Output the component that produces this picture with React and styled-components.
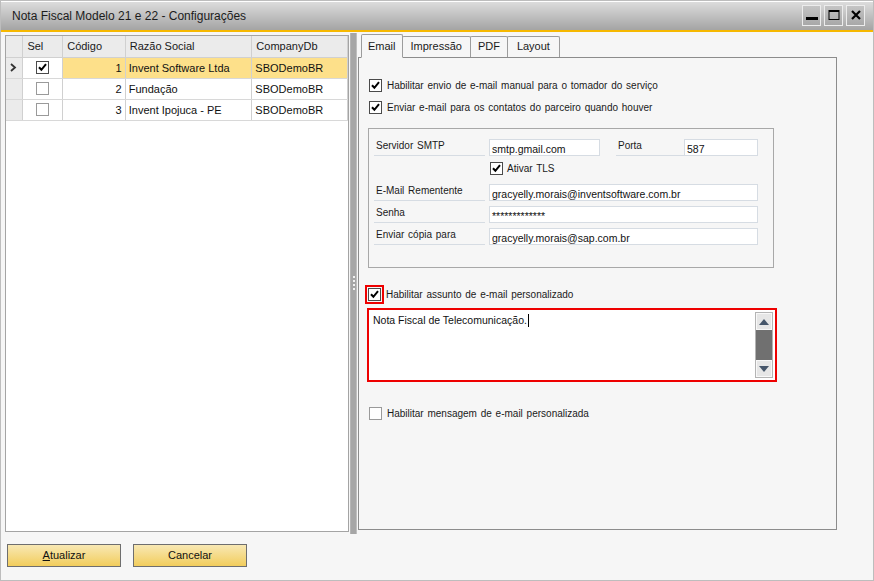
import React from 'react';
import styled, { createGlobalStyle } from 'styled-components';

const GlobalStyle = createGlobalStyle`
    html, body {
        margin: 0;
        padding: 0;
        background: #f6f6f6;
    }
    * {
        box-sizing: border-box;
    }
`

const Window = styled.div`
    background-color: #f6f6f6;
    border: 1px solid #bdbdbd;
    display: flex;
    flex-direction: column;
    font-family: "Liberation Sans", Arial, sans-serif;
    height: 581px;
    width: 874px;
`

const TitleBar = styled.div`
    align-items: center;
    background: linear-gradient(#dcdcdc, #a4a4a4);
    border-bottom: 2px solid #f6b800;
    border-top: 1px solid #ffffff;
    display: flex;
    height: 31px;
    padding: 0 8px 0 11px;
`

const Title = styled.div`
    color: #1c1c1c;
    flex: 1;
    font-size: 12px;
`

const WinButtons = styled.div`
    display: flex;
    gap: 3px;
    margin-top: -2px;
`

const WinButton = styled.div`
    align-items: center;
    background: linear-gradient(#c4c4c4, #a8a8a8);
    border: 1px solid #ececec;
    display: flex;
    height: 21px;
    justify-content: center;
    width: 19px;
`

const Main = styled.div`
    display: flex;
    height: 502px;
    padding-left: 4px;
`

const LeftPane = styled.div`
    padding-top: 3px;
    width: 344px;
`

const GridBox = styled.div`
    background: #ffffff;
    border: 1px solid #a4a4a4;
    height: 497px;
`

const Table = styled.table`
    border-collapse: collapse;
    font-size: 11px;
    table-layout: fixed;
`

const HeadCell = styled.th`
    background: #ebebeb;
    border-bottom: 1px solid #d0d0d0;
    border-right: 1px solid #d0d0d0;
    color: #1a1a1a;
    font-weight: normal;
    height: 21px;
    padding: 0 0 0 4px;
    text-align: left;
    width: ${p => p.w}px;
`

const RowHead = styled.td`
    background: #ebebeb;
    border-bottom: 1px solid #d8d8d8;
    border-right: 1px solid #d0d0d0;
    height: 21px;
    padding: 0 0 0 4px;
`

const Cell = styled.td`
    background: ${p => (p.sel ? '#fde08a' : '#ffffff')};
    border-bottom: 1px solid #d8d8d8;
    border-right: 1px solid #d0d0d0;
    color: #111111;
    height: 21px;
    padding: 0 3px;
    text-align: ${p => p.align || 'left'};
    white-space: nowrap;
`

const BoxCell = styled(Cell)`
    padding-left: 13px;
`

const Splitter = styled.div`
    align-items: center;
    background: linear-gradient(90deg, #c4c4c4 0, #a6a6a6 1px, #a6a6a6 6px, #d8d8d8 7px);
    display: flex;
    flex-direction: column;
    gap: 2px;
    justify-content: center;
    margin: 1px 1px 0 1px;
    padding-bottom: 2px;
    width: 7px;
`

const Dot = styled.span`
    background: #f2f2f2;
    height: 2px;
    width: 2px;
`

const RightPane = styled.div`
    display: flex;
    flex-direction: column;
    padding-top: 2px;
    width: 479px;
`

const TabStrip = styled.div`
    align-items: flex-end;
    display: flex;
    height: 23px;
    padding-left: 3px;
    position: relative;
    z-index: 1;
`

const Tab = styled.div`
    background: #f6f6f6;
    border: 1px solid #9c9c9c;
    border-bottom: ${p => (p.active ? '1px solid #f6f6f6' : 'none')};
    border-radius: 2px 2px 0 0;
    color: #1a1a1a;
    font-size: 11px;
    height: ${p => (p.active ? 24 : 21)}px;
    margin-bottom: ${p => (p.active ? -1 : 0)}px;
    margin-left: ${p => (p.active ? 0 : -1)}px;
    padding: ${p => (p.active ? '5px' : '3px')} ${p => p.px || 7}px 0;
`

const TabPanel = styled.div`
    background: #f6f6f6;
    border: 1px solid #8c8c8c;
    display: flex;
    flex-direction: column;
    height: 473px;
    padding: 21px 0 0 10px;
`

const CheckRow = styled.div`
    align-items: center;
    display: flex;
    gap: 5px;
    height: 13px;
    margin-top: ${p => p.mt || 0}px;
`

const Box = styled.span`
    align-items: center;
    background: #ffffff;
    border: 1px solid ${p => (p.checked ? '#4a4a4a' : '#9a9a9a')};
    display: flex;
    height: 13px;
    justify-content: center;
    outline: ${p => (p.mark ? '2px solid #ee0000' : 'none')};
    outline-offset: 1px;
    width: 13px;
`

const Label = styled.span`
    color: #1a1a1a;
    font-size: 10px;
    word-spacing: 1px;
`

const Group = styled.div`
    border: 1px solid #a8a8a8;
    display: grid;
    grid-template-columns: 115px 111px 16px 68px 74px;
    grid-template-rows: 17px 18px 17px 17px 17px;
    height: 140px;
    margin: 14px 0 0 -1px;
    padding: 10px 0 0 5px;
    row-gap: 5px;
    width: 406px;
`

const FieldLabel = styled.div`
    border-bottom: 1px solid #d6dce3;
    color: #1a1a1a;
    font-size: 10px;
    grid-column: ${p => p.col || 'auto'};
    margin-right: ${p => p.mr || 0}px;
    padding: 1px 0 0 2px;
    word-spacing: 1px;
`

const Input = styled.div`
    background: #ffffff;
    border: 1px solid #d6dce3;
    color: #111111;
    font-size: 10.5px;
    grid-column: ${p => p.col || 'auto'};
    padding: 3px 0 0 2px;
    white-space: nowrap;
`

const TlsCell = styled.div`
    align-items: center;
    display: flex;
    gap: 4px;
    grid-column: 2 / 6;
    padding: 0 0 3px 1px;
`

const SubjectRow = styled(CheckRow)`
    margin-left: -1px;
`

const Memo = styled.div`
    background: #ffffff;
    border: 2px solid #ee0000;
    display: flex;
    height: 74px;
    margin: 7px 0 0 -2px;
    padding: 2px;
    width: 410px;
`

const MemoText = styled.div`
    align-items: flex-start;
    color: #111111;
    display: flex;
    flex: 1;
    font-size: 10.5px;
    padding: 2px 0 0 2px;
`

const Caret = styled.span`
    border-left: 1px solid #000000;
    height: 13px;
    margin-left: 1px;
`

const ScrollBar = styled.div`
    border: 1px solid #b4b4b4;
    display: flex;
    flex-direction: column;
    width: 18px;
`

const ScrollBtn = styled.div`
    align-items: center;
    background: #e6e6e6;
    border: 1px solid #f8f8f8;
    display: flex;
    height: 17px;
    justify-content: center;
`

const Thumb = styled.div`
    background: #707070;
    flex: 1;
`

const Footer = styled.div`
    display: flex;
    gap: 12px;
    padding: 10px 0 0 6px;
`

const Button = styled.div`
    background: linear-gradient(#f8e8b4, #f2cd5c);
    border: 1px solid #6e6e6e;
    color: #111111;
    font-size: 11px;
    height: 23px;
    padding-top: 4px;
    text-align: center;
    width: 114px;

    u {
        text-decoration: underline;
    }
`

const Check = () => (
    <svg width="9" height="9" viewBox="0 0 9 9">
        <path d="M1 4.2 L3.4 6.8 L8 1.2" fill="none" stroke="#000" strokeWidth="2" />
    </svg>
);

const CheckBox = ({ checked, mark }) => (
    <Box checked={checked} mark={mark}>{checked && <Check />}</Box>
);

const rows = [
    { code: 1, name: 'Invent Software Ltda', db: 'SBODemoBR', checked: true },
    { code: 2, name: 'Fundação', db: 'SBODemoBR' },
    { code: 3, name: 'Invent Ipojuca - PE', db: 'SBODemoBR' },
];

const App = () => (
    <Window>
        <GlobalStyle />
        <TitleBar>
            <Title>Nota Fiscal Modelo 21 e 22 - Configurações</Title>
            <WinButtons>
                <WinButton>
                    <svg width="12" height="12" viewBox="0 0 12 12">
                        <rect x="0" y="8" width="12" height="3" fill="#000" />
                    </svg>
                </WinButton>
                <WinButton>
                    <svg width="12" height="12" viewBox="0 0 12 12">
                        <rect x="1" y="1.5" width="10" height="9" fill="none" stroke="#000" strokeWidth="1" />
                        <rect x="1" y="1" width="10" height="2" fill="#000" />
                    </svg>
                </WinButton>
                <WinButton>
                    <svg width="12" height="12" viewBox="0 0 12 12">
                        <path d="M2 2 L10 10 M10 2 L2 10" stroke="#000" strokeWidth="2.2" />
                    </svg>
                </WinButton>
            </WinButtons>
        </TitleBar>
        <Main>
            <LeftPane>
                <GridBox>
                    <Table>
                        <thead>
                            <tr>
                                <HeadCell w={17} />
                                <HeadCell w={40}>Sel</HeadCell>
                                <HeadCell w={63}>Código</HeadCell>
                                <HeadCell w={127}>Razão Social</HeadCell>
                                <HeadCell w={96}>CompanyDb</HeadCell>
                            </tr>
                        </thead>
                        <tbody>
                            {rows.map((r, i) => (
                                <tr key={r.code}>
                                    <RowHead>
                                        {i === 0 && (
                                            <svg width="7" height="9" viewBox="0 0 7 9">
                                                <path d="M1 1 L5 4.5 L1 8" fill="none" stroke="#333" strokeWidth="1.8" />
                                            </svg>
                                        )}
                                    </RowHead>
                                    <BoxCell>
                                        <CheckBox checked={r.checked} />
                                    </BoxCell>
                                    <Cell sel={i === 0} align="right">{r.code}</Cell>
                                    <Cell sel={i === 0}>{r.name}</Cell>
                                    <Cell sel={i === 0}>{r.db}</Cell>
                                </tr>
                            ))}
                        </tbody>
                    </Table>
                </GridBox>
            </LeftPane>
            <Splitter>
                <Dot /><Dot /><Dot /><Dot />
            </Splitter>
            <RightPane>
                <TabStrip>
                    <Tab active px={6}>Email</Tab>
                    <Tab px={8}>Impressão</Tab>
                    <Tab>PDF</Tab>
                    <Tab px={9}>Layout</Tab>
                </TabStrip>
                <TabPanel>
                    <CheckRow>
                        <CheckBox checked />
                        <Label>Habilitar envio de e-mail manual para o tomador do serviço</Label>
                    </CheckRow>
                    <CheckRow mt={9}>
                        <CheckBox checked />
                        <Label>Enviar e-mail para os contatos do parceiro quando houver</Label>
                    </CheckRow>
                    <Group>
                        <FieldLabel mr={4}>Servidor SMTP</FieldLabel>
                        <Input>smtp.gmail.com</Input>
                        <span />
                        <FieldLabel>Porta</FieldLabel>
                        <Input>587</Input>
                        <TlsCell>
                            <CheckBox checked />
                            <Label>Ativar TLS</Label>
                        </TlsCell>
                        <FieldLabel mr={4}>E-Mail Rementente</FieldLabel>
                        <Input col="2 / 6">gracyelly.morais@inventsoftware.com.br</Input>
                        <FieldLabel mr={4}>Senha</FieldLabel>
                        <Input col="2 / 6">*************</Input>
                        <FieldLabel mr={4}>Enviar cópia para</FieldLabel>
                        <Input col="2 / 6">gracyelly.morais@sap.com.br</Input>
                    </Group>
                    <SubjectRow mt={20}>
                        <CheckBox checked mark />
                        <Label>Habilitar assunto de e-mail personalizado</Label>
                    </SubjectRow>
                    <Memo>
                        <MemoText>
                            Nota Fiscal de Telecomunicação.<Caret />
                        </MemoText>
                        <ScrollBar>
                            <ScrollBtn>
                                <svg width="10" height="6" viewBox="0 0 10 6">
                                    <path d="M5 0 L10 6 L0 6 Z" fill="#46566a" />
                                </svg>
                            </ScrollBtn>
                            <Thumb />
                            <ScrollBtn>
                                <svg width="10" height="6" viewBox="0 0 10 6">
                                    <path d="M0 0 L10 0 L5 6 Z" fill="#46566a" />
                                </svg>
                            </ScrollBtn>
                        </ScrollBar>
                    </Memo>
                    <CheckRow mt={25}>
                        <CheckBox />
                        <Label>Habilitar mensagem de e-mail personalizada</Label>
                    </CheckRow>
                </TabPanel>
            </RightPane>
        </Main>
        <Footer>
            <Button><u>A</u>tualizar</Button>
            <Button>Cancelar</Button>
        </Footer>
    </Window>
);

export default App;
